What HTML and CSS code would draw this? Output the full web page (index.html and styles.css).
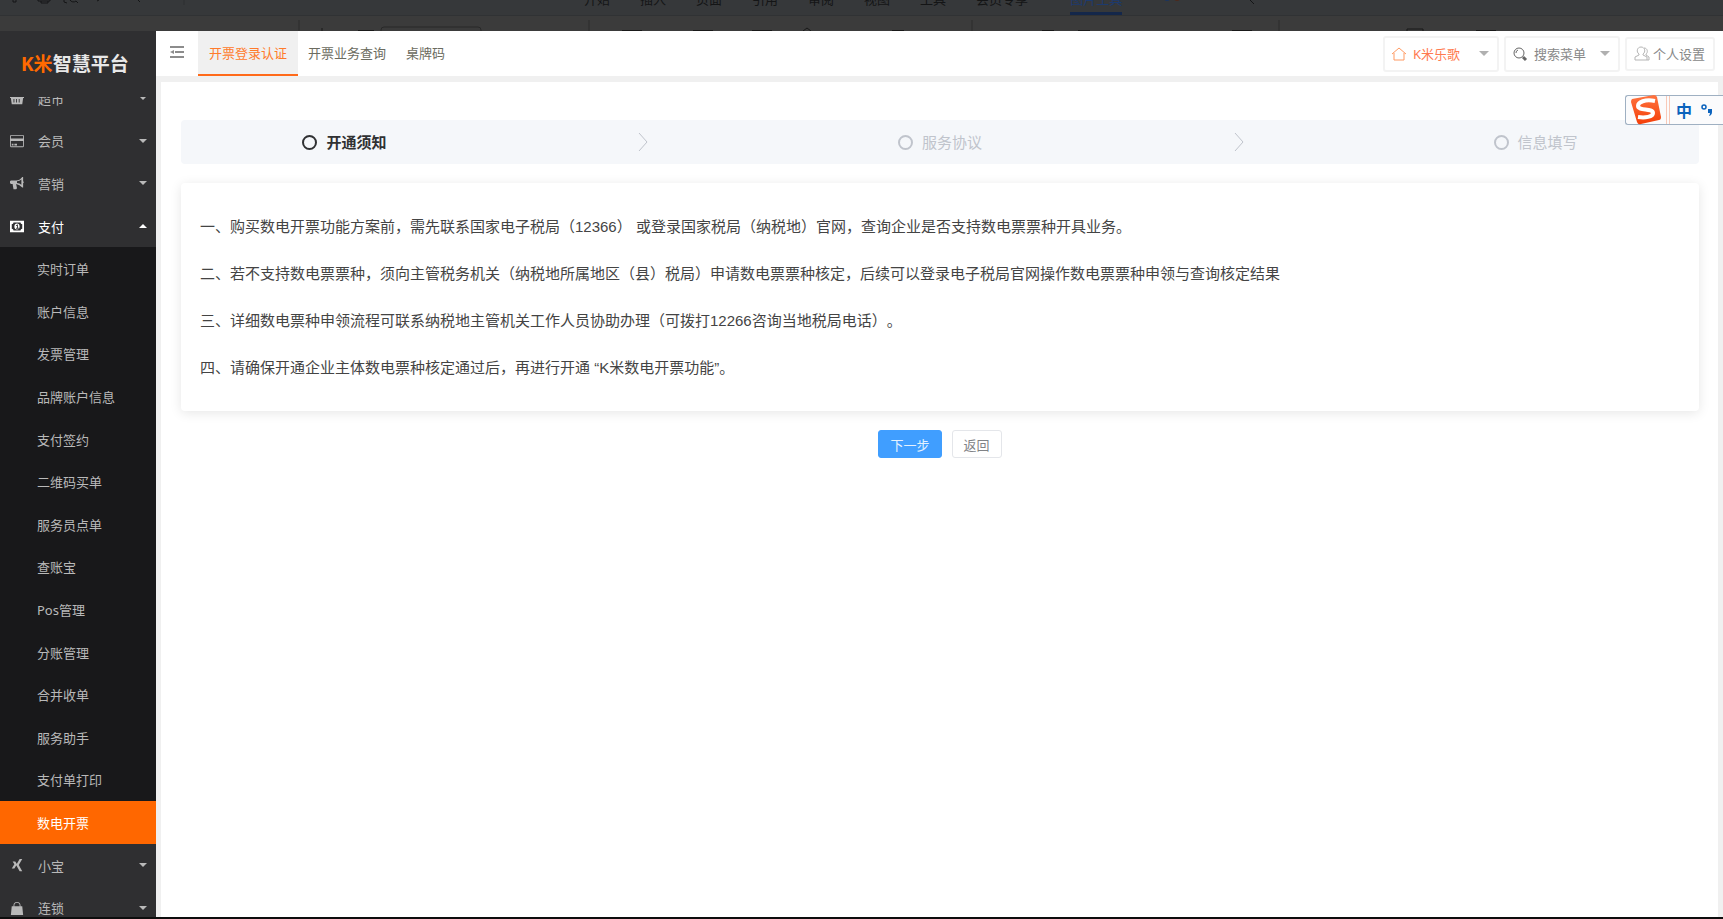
FILE: index.html
```html
<!DOCTYPE html>
<html lang="zh-CN">
<head>
<meta charset="utf-8">
<title>K米智慧平台</title>
<link rel="stylesheet" href="styles.css">
</head>
<body>
<div class="host-bar">
  <div class="host-menu">
    <div class="host-tools">
      <svg width="190" height="6" viewBox="0 0 190 6" fill="none" stroke="currentColor"><path d="M13 0v2h3V0M38 0v1h12V0M41 1v2h7V1M64 0v2l3 1M70 0a4 4 0 0 0 6 1l2 2M97 1l2-1M138 0l2 2"/><path d="M184 0v5" stroke="#2d2f31"/></svg>
    </div>
    <nav class="host-tabs">
      <span>开始</span><span>插入</span><span>页面</span><span>引用</span><span>审阅</span><span>视图</span><span>工具</span><span>会员专享</span><span class="host-current">图片工具</span>
    </nav>
    <svg class="host-find" width="100" height="8" viewBox="0 0 100 8" fill="none"><circle cx="9" cy="-2" r="3" fill="#1b3560"/><circle cx="19" cy="-2" r="3" fill="#4d2a1d"/><path d="M92 0l4 4" stroke="#141516" stroke-width="1"/></svg>
  </div>
  <div class="host-ribbon">
    <svg width="1500" height="15" viewBox="0 0 1500 15" fill="none" stroke="#191919">
      <path d="M299 4v11M589 4v11M972 4v11M1279 4v11" stroke="#2d2d2d"/>
      <path d="M322 12v3" /><path d="M358 14.500h16"/><path d="M381 15v-1q0-3 3-3h94q3 0 3 3v1" stroke="#282828"/>
      <path d="M622 14.500h20M693 14.500h20M752 14.500h20M892 14.500h12M1042 14.500h12M1078 14.500h12M1232 14.500h20M1476 14.500h20M803 15l4-3 4 3M1407 15v-2h16v2"/>
    </svg>
  </div>
</div>
<div class="app">
  <aside class="sidebar">
    <div class="brand"><span class="brand-mark">K米</span>智慧平台</div>
    <nav class="nav">
      <div class="nav-list">
        <button class="nav-row"><svg class="ico" viewBox="0 0 16 16"><path fill-rule="evenodd" d="M0 5h3l1-3h2L5 5h6l-1-3h2l1 3h3v3h-1l-1 7H2L1 8H0zM4 9v4h1V9zM7 9v4h1V9zM10 9v4h1V9z"/></svg><span>超市</span><i class="caret"></i></button>
        <button class="nav-row"><svg class="ico" viewBox="0 0 16 16"><path fill-rule="evenodd" d="M1 1h14l1 1v12l-1 1H1l-1-1V2zM1 2v3h14V2zM1 8v6h14V8zM2 11h2v2H2zM5 11h3v2H5z"/></svg><span>会员</span><i class="caret"></i></button>
        <button class="nav-row"><svg class="ico" viewBox="0 0 16 16"><path fill-rule="evenodd" d="M1 5h6q4 0 7-4h1v5l1 1-1 1v5h-1q-3-3-7-4l1 5-1 1H4L3 9H1L0 8V6zM8 6v2q3 0 5 2V4Q11 6 8 6z"/></svg><span>营销</span><i class="caret"></i></button>
        <button class="nav-row open"><svg class="ico" viewBox="0 0 16 16"><path fill-rule="evenodd" d="M0 2h16v13H0zM4 4q0 2-2 2v5q2 0 2 2h8q0-2 2-2V6q-2 0-2-2zM8 5a3 3.500 0 1 1 0 7a3 3.500 0 1 1 0-7zM7 7v1h1v2H7v1h3v-1H9V6z"/></svg><span>支付</span><i class="caret up"></i></button>
        <div class="submenu">
          <a href="#">实时订单</a><a href="#">账户信息</a><a href="#">发票管理</a><a href="#">品牌账户信息</a><a href="#">支付签约</a><a href="#">二维码买单</a><a href="#">服务员点单</a><a href="#">查账宝</a><a href="#">Pos管理</a><a href="#">分账管理</a><a href="#">合并收单</a><a href="#">服务助手</a><a href="#">支付单打印</a><a href="#" class="current">数电开票</a>
        </div>
        <button class="nav-row"><svg class="ico" viewBox="0 0 16 16"><path d="M3 4h3l2 3-3 5H2l3-5zM11 1h3L10 8l4 7h-3L7 8z"/></svg><span>小宝</span><i class="caret"></i></button>
        <button class="nav-row"><svg class="ico" viewBox="0 0 16 16"><path fill-rule="evenodd" d="M2 6h2V5a4 4 0 0 1 8 0v1h2l1 10H1zM5 6h6V5a3 3 0 0 0-6 0z"/></svg><span>连锁</span><i class="caret"></i></button>
      </div>
    </nav>
  </aside>
  <div class="main">
    <header class="topbar">
      <button class="fold" aria-label="收起菜单"><svg width="14" height="14" viewBox="0 0 14 14" fill="none" stroke="#8c8c8c" stroke-width="2"><path d="M0 2h14M5 7h9M0 12h14"/><path d="M0 7l4-2v4z" fill="#8c8c8c" stroke="none"/></svg></button>
      <nav class="tabs"><a href="#" class="tab active">开票登录认证</a><a href="#" class="tab">开票业务查询</a><a href="#" class="tab">桌牌码</a></nav>
      <div class="tools">
        <button class="tool shop"><svg width="16" height="16" viewBox="0 0 16 16" fill="none" stroke="#ff9a62"><path d="M1 8l7-6 7 6M3 7v7h10V7"/></svg><span>K米乐歌</span><i class="caret"></i></button>
        <button class="tool search"><svg width="16" height="16" viewBox="0 0 16 16" fill="none" stroke="#666"><circle cx="7" cy="7" r="5"/><path d="M11 11l3 3" stroke-width="3"/><path d="M4 7a3 3 0 0 1 2-3"/></svg><span>搜索菜单</span><i class="caret"></i></button>
        <button class="tool user"><svg width="16" height="16" viewBox="0 0 16 16" fill="none" stroke="#b5b5b5"><path d="M5 8C2 6 3 1 7 1s5 5 2 7v1l4 2v3H1v-3l4-2zM10 2c4 0 4 5 2 6v1l3 2v3h-2"/></svg><span>个人设置</span></button>
      </div>
    </header>
    <main class="page">
      <ol class="steps">
        <li class="step now"><i class="dot"></i><span>开通须知</span><svg class="arrow" width="14" height="20" viewBox="0 0 14 20" fill="none" stroke="#c0c4cc"><path d="M4 1l8 9-8 9"/></svg></li>
        <li class="step"><i class="dot"></i><span>服务协议</span><svg class="arrow" width="14" height="20" viewBox="0 0 14 20" fill="none" stroke="#c0c4cc"><path d="M4 1l8 9-8 9"/></svg></li>
        <li class="step"><i class="dot"></i><span>信息填写</span></li>
      </ol>
      <section class="notice">
        <p>一、购买数电开票功能方案前，需先联系国家电子税局（12366） 或登录国家税局（纳税地）官网，查询企业是否支持数电票票种开具业务。</p>
        <p>二、若不支持数电票票种，须向主管税务机关（纳税地所属地区（县）税局）申请数电票票种核定，后续可以登录电子税局官网操作数电票票种申领与查询核定结果</p>
        <p>三、详细数电票种申领流程可联系纳税地主管机关工作人员协助办理（可拨打12266咨询当地税局电话）。</p>
        <p>四、请确保开通企业主体数电票种核定通过后，再进行开通 “K米数电开票功能”。</p>
      </section>
      <div class="actions"><button class="btn primary">下一步</button><button class="btn">返回</button></div>
    </main>
  </div>
</div>
<div class="ime">
  <svg width="34" height="32" viewBox="0 0 34 32"><defs><linearGradient id="g" x1="0" y1="0" x2="0" y2="1"><stop offset="0" stop-color="#ff7440"/><stop offset="1" stop-color="#f43e08"/></linearGradient></defs><path d="M3 5L25 1q2 0 3 2l4 20q0 3-2 3L12 30q-3 1-4-2L2 8q0-2 1-3z" fill="url(#g)"/><path d="M26 7C16 5 9 8 9 12c0 5 15 2 15 7 0 4-8 5-15 4" fill="none" stroke="#fff" stroke-width="4"/></svg>
  <span class="ime-rule"></span>
  <span class="ime-mode">中</span>
  <svg width="12" height="12" viewBox="0 0 12 12"><circle cx="3" cy="3" r="2" fill="none" stroke="#0b63bd" stroke-width="1.500"/><path d="M7 5h4v3q0 3-3 4 1-2 1-3H7z" fill="#0b63bd"/></svg>
</div>
</body>
</html>
```
FILE: styles.css
```css
* { box-sizing: border-box; }
body {
  margin: 0;
  height: 100vh;
  display: flex;
  flex-direction: column;
  overflow: hidden;
  background: #0d0d0d;
  font-family: "Noto Sans", "Noto Sans CJK SC", sans-serif;
  font-size: 13px;
  color: #666;
}
button { font: inherit; color: inherit; cursor: pointer; }
a { color: inherit; text-decoration: none; }

.host-bar { height: 31px; flex: none; overflow: hidden; background: #3b3b3b; }
.host-menu { height: 16px; display: flex; overflow: hidden; background: #36383a; color: #141516; border-bottom: 1px solid #303234; }
.host-tools { width: 584px; flex: none; }
.host-tools svg, .host-ribbon svg { display: block; }
.host-tabs { display: flex; gap: 30px; line-height: 18px; margin-top: -10px; }
.host-tabs span { height: 25px; flex: none; }
.host-tabs .host-current { color: #1d3a6e; border-bottom: 3px solid #14274a; margin-left: 12px; }
.host-find { margin-left: 36px; }

.app { flex: 1; min-height: 0; display: flex; margin-bottom: 2px; }
.sidebar { width: 156px; flex: none; display: flex; flex-direction: column; background: #2f2f31; color: #b9b9b9; }
.brand { height: 66px; flex: none; padding-left: 21px; line-height: 66px; font-size: 19px; font-weight: 700; color: #e8e8e8; white-space: nowrap; }
.brand-mark { color: #ff6a00; }
.nav { flex: 1; min-height: 0; overflow: hidden; }
.nav-list { height: calc(100% + 32px); margin-top: -20px; display: flex; flex-direction: column; }
.nav-row { flex: 1; min-height: 0; display: flex; align-items: center; gap: 13px; padding: 0 9px; border: 0; background: none; text-align: left; }
.nav-row span { flex: 1; }
.nav-row.open { color: #fff; }
.ico { width: 16px; height: 14px; fill: currentColor; }
.caret { border: 4px solid transparent; border-top-color: currentColor; border-bottom: 0; }
.caret.up { border-top: 0; border-bottom: 4px solid currentColor; }
.submenu { flex: 14; min-height: 0; display: flex; flex-direction: column; background: #18181a; }
.submenu a { flex: 1; display: flex; align-items: center; padding-left: 37px; }
.submenu .current { background: #ff6700; color: #fff; }

.main { flex: 1; min-width: 0; display: flex; flex-direction: column; background: #f0f0f0; }
.topbar { height: 45px; flex: none; display: flex; background: #fff; }
.fold { width: 42px; padding: 0; border: 0; background: none; }
.tabs { display: flex; }
.tab { padding: 0 10px; line-height: 45px; color: #6b6b60; }
.tab.active { padding: 0 11px; background: #f0f0f0; color: #ff7a2a; box-shadow: inset 0 -2px #ff6a1a; }
.tools { margin-left: auto; padding-right: 8px; display: flex; align-items: center; gap: 5px; }
.tool { height: 36px; display: flex; align-items: center; gap: 6px; padding: 0 8px; border: 2px solid #f3f3f3; border-radius: 3px; background: #fff; color: #888; white-space: nowrap; }
.tool .caret { margin-left: auto; border-width: 5px 5px 0; color: #b0b0b0; }
.shop, .search { width: 116px; padding: 0 8px 0 6px; }
.tool.shop { color: #ff7a50; }
.user { height: 34px; width: 90px; gap: 3px; padding: 0 7px; }

.page { flex: 1; margin: 6px 5px 0; padding: 38px 19px 0 20px; background: #fff; }
.steps { display: flex; margin: 0; padding: 0 8%; list-style: none; background: #f5f7fa; border-radius: 4px; font-size: 15px; line-height: 44px; color: #c0c4cc; }
.step { display: flex; align-items: center; flex: 1; white-space: nowrap; }
.step:last-child { flex: none; }
.step.now { color: #303133; font-weight: 700; }
.dot { width: 15px; height: 15px; margin-right: 9px; border: 2px solid currentColor; border-radius: 50%; }
.arrow { margin: 0 auto; }
.notice { margin-top: 19px; padding: 32px 19px; border-radius: 4px; background: #fff; box-shadow: 0 2px 12px rgba(0, 0, 0, .1); font-family: "Liberation Sans", "Noto Sans CJK SC", sans-serif; font-size: 15px; line-height: 23px; color: #444; text-spacing-trim: space-all; }
.notice p { margin: 0 0 24px; }
.notice p:last-child { margin: 0; }
.actions { display: flex; justify-content: center; gap: 10px; margin-top: 19px; }
.btn { height: 28px; padding: 0 11px; border: 1px solid #e4e6ea; border-radius: 3px; background: #fff; color: #808286; }
.btn.primary { border-color: #409eff; background: #409eff; color: #e3f1ff; }

.ime { position: absolute; top: 95px; right: 0; height: 30px; width: 98px; display: flex; align-items: center; border: 1px solid #9fb0c2; border-right: 0; border-radius: 3px 0 0 3px; background: #fbfbfc; padding-left: 3px; }
.ime-rule { width: 4px; height: 28px; margin-left: 3px; border: solid #f8c9b8; border-width: 0 1px; }
.ime-mode { margin: 0 9px 0 6px; font-size: 16px; font-weight: 700; color: #0b63bd; }
```
